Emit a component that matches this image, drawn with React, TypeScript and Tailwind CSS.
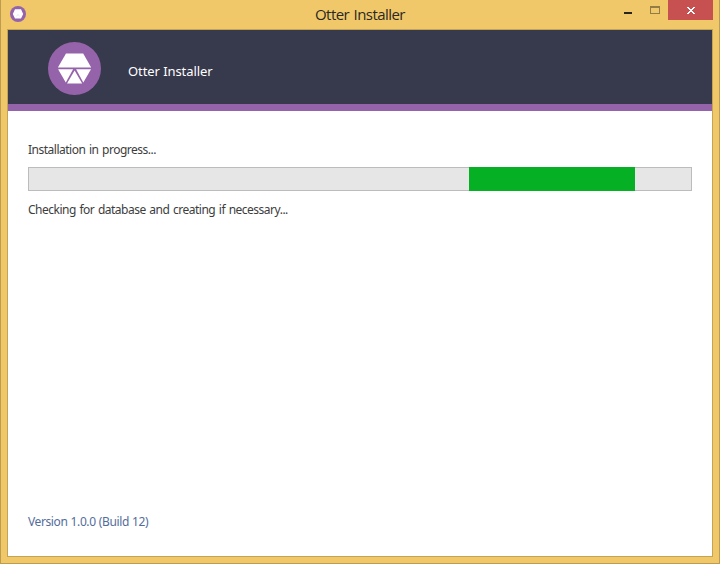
function Logo({ className }: { className: string }) {
  return (
    <svg viewBox="0 0 53 53" className={className} aria-hidden="true">
      <circle cx="26.5" cy="26.5" r="26.5" fill="#9563a9" />
      <path d="M18 11.4h17.2L43.2 25.6H9.9Z" fill="#fff" />
      <path d="M10.1 27.3h15L17.8 40.6Z" fill="#fff" />
      <path d="M28.1 27.3H43l-7.7 13.3Z" fill="#fff" />
      <path d="M26.6 28.4 34.2 41.6H19Z" fill="#fff" />
    </svg>
  );
}

function SmallLogo() {
  return (
    <svg viewBox="0 0 16 16" className="size-4" aria-hidden="true">
      <circle cx="8" cy="8" r="8" fill="#9563a9" />
      <path d="M5 3.2h6L13.2 8 11 12.6H5L2.8 8Z" fill="#fff" />
      <path d="M6.4 10.5 8 8.2l1.6 2.3" fill="none" stroke="#e6dcea" strokeWidth=".6" />
    </svg>
  );
}

function TitleBar() {
  return (
    <div className="flex h-[29px] items-start">
      <div className="w-[130px] pt-1.5 pl-[9px]">
        <SmallLogo />
      </div>
      <div className="flex-1 pl-[184px] font-['Open_Sans','Noto_Sans',sans-serif] text-[15px] leading-[29px] tracking-[-0.55px] [word-spacing:1px] whitespace-nowrap text-[#2b2822]">
        Otter Installer
      </div>
      <div className="flex items-start">
        <span className="mt-3 mr-[18px] h-0.5 w-2 bg-[#27251f]" />
        <span className="mt-1.5 mr-2 h-2 w-2.5 border border-t-2 border-[#927c45]" />
        <span className="mr-1.5 flex h-5 w-[45px] justify-center bg-[#c75050] pt-[7px]">
          <svg viewBox="0 0 8 7" className="h-[7px] w-2" shapeRendering="crispEdges" aria-hidden="true">
            <path
              d="M0 0h2v1h1v1h2V1h1V0h2v1H7v1H6v1H5v1h1v1h1v1h1v1H6V6H5V5H3v1H2v1H0V6h1V5h1V4h1V3H2V2H1V1H0Z"
              fill="#fff"
            />
          </svg>
        </span>
      </div>
    </div>
  );
}

export default function App() {
  return (
    <div className="flex h-[564px] w-[720px] flex-col overflow-hidden border-x border-b border-[#bb9c50] bg-[#f0c869] font-['Noto_Sans','Open_Sans',sans-serif]">
      <TitleBar />
      <main className="mx-1.5 mb-1.5 flex flex-1 flex-col border border-[#c3a354] bg-white">
        <header className="flex h-[81px] items-start border-b-7 border-[#9563a9] bg-[#37394c] pl-10">
          <Logo className="mt-3 size-[53px]" />
          <h1 className="mt-[31px] ml-[27px] text-[13px] leading-5 tracking-[-0.08px] whitespace-nowrap text-white">
            Otter Installer
          </h1>
        </header>
        <section className="flex flex-1 flex-col px-5 pt-[31px] text-[12px] leading-4 text-[#3d3d3d]">
          <p className="tracking-[-0.5px] [word-spacing:1px] whitespace-nowrap">Installation in progress...</p>
          <div className="mt-[9px] flex h-6 border border-[#bcbcbc] bg-[#e6e6e6]">
            <div className="-my-px ml-[440px] w-[166px] bg-[#06b025]" />
          </div>
          <p className="mt-[11px] tracking-[-0.5px] [word-spacing:1px] whitespace-nowrap">
            Checking for database and creating if necessary...
          </p>
          <p className="mt-auto mb-[26px] tracking-[-0.4px] [word-spacing:0.5px] whitespace-nowrap text-[#526d9b]">
            Version 1.0.0 (Build 12)
          </p>
        </section>
      </main>
    </div>
  );
}
